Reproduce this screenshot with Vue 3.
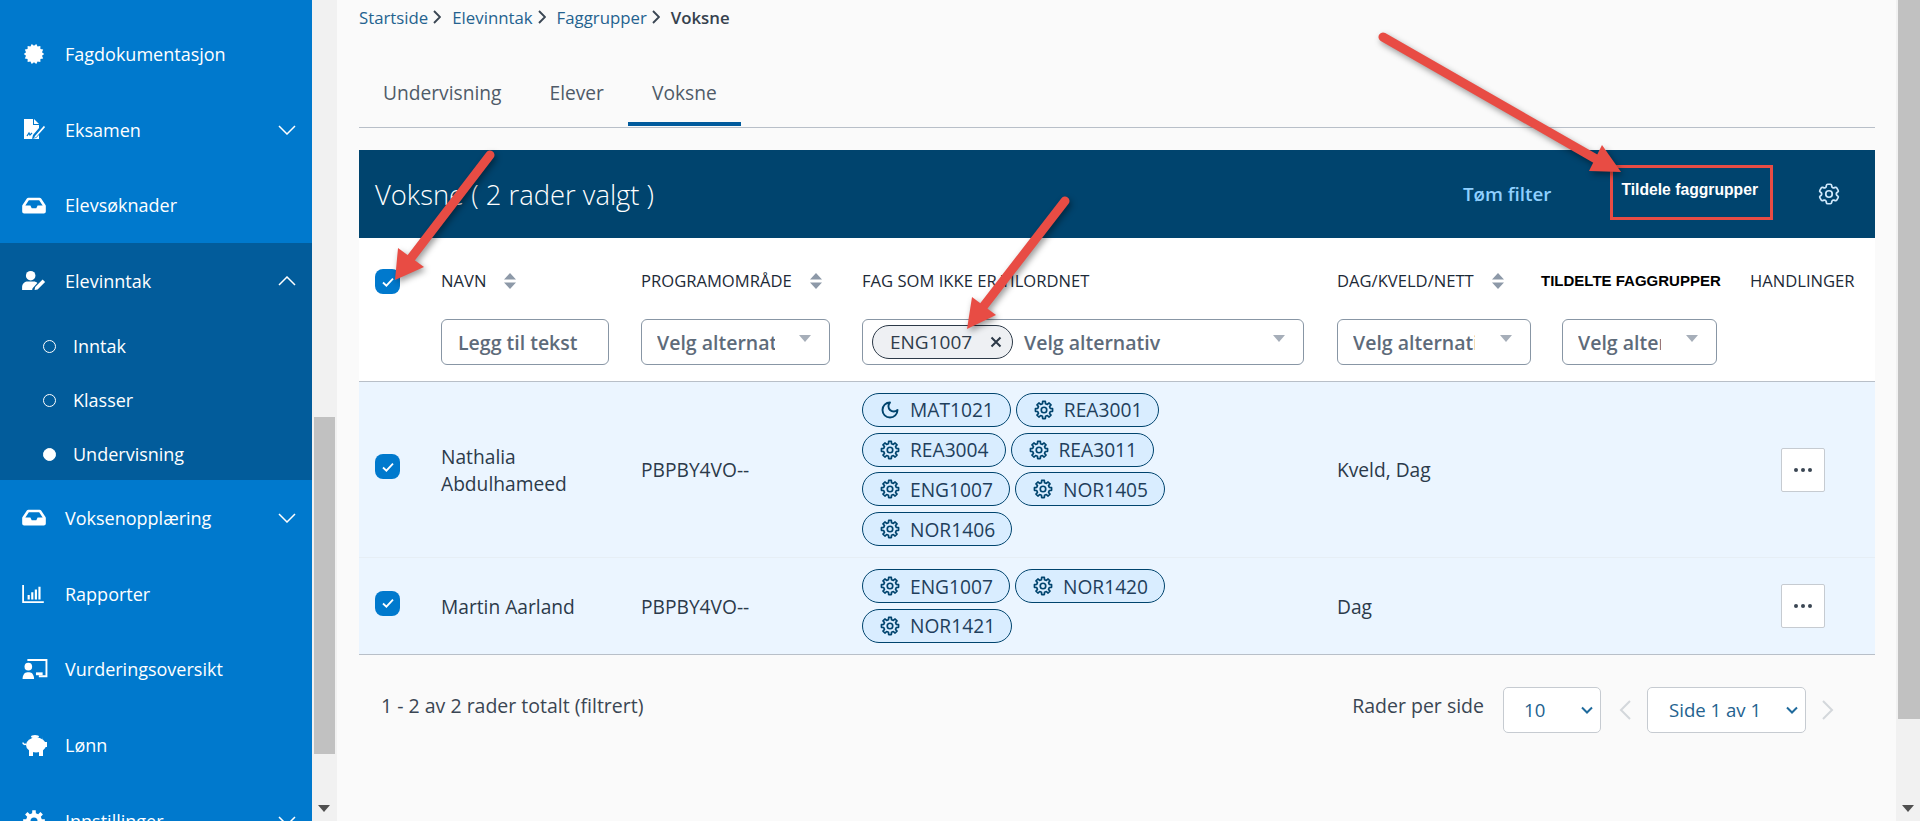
<script setup>
function gearPath(teeth, ro, ri) {
  const pts = []
  const step = (Math.PI * 2) / teeth
  for (let i = 0; i < teeth; i++) {
    const a = i * step - Math.PI / 2
    const w = step * 0.2
    const n = step * 0.3
    pts.push([ri, a - n], [ro, a - w], [ro, a + w], [ri, a + n])
  }
  return 'M' + pts.map(([r, a]) => (12 + r * Math.cos(a)).toFixed(2) + ' ' + (12 + r * Math.sin(a)).toFixed(2)).join('L') + 'Z'
}
function burstPath(points, ro, ri) {
  const pts = []
  for (let i = 0; i < points * 2; i++) {
    const r = i % 2 ? ri : ro
    const a = (i * Math.PI) / points
    pts.push((12 + r * Math.cos(a)).toFixed(2) + ' ' + (12 + r * Math.sin(a)).toFixed(2))
  }
  return 'M' + pts.join('L') + 'Z'
}
const gear8 = gearPath(8, 10.4, 7.8)
const burst = burstPath(14, 10.2, 8.2)
const inbox = 'M567.938 243.908L462.25 85.374A48.003 48.003 0 0 0 422.311 64H153.689a48 48 0 0 0-39.938 21.374L8.062 243.908A47.994 47.994 0 0 0 0 270.533V400c0 26.51 21.49 48 48 48h480c26.51 0 48-21.49 48-48V270.533a47.994 47.994 0 0 0-8.062-26.625zM162.252 128h251.497l85.333 128H376l-32 64H232l-32-64H76.918l85.334-128z'

const menu = [
  { label: 'Fagdokumentasjon', icon: 'burst' },
  { label: 'Eksamen', icon: 'exam', chev: 'down' },
  { label: 'Elevsøknader', icon: 'inbox' },
]
const menuAfter = [
  { label: 'Voksenopplæring', icon: 'inbox', chev: 'down' },
  { label: 'Rapporter', icon: 'chart' },
  { label: 'Vurderingsoversikt', icon: 'board' },
  { label: 'Lønn', icon: 'pig' },
  { label: 'Innstillinger', icon: 'cog', chev: 'down' },
]
const subs = [
  { label: 'Inntak', on: false },
  { label: 'Klasser', on: false },
  { label: 'Undervisning', on: true },
]
const rows = [
  {
    name: 'Nathalia Abdulhameed', prog: 'PBPBY4VO--', time: 'Kveld, Dag', cls: 'tall',
    chips: [['moon', 'MAT1021'], ['gear', 'REA3001'], ['gear', 'REA3004'], ['gear', 'REA3011'], ['gear', 'ENG1007'], ['gear', 'NOR1405'], ['gear', 'NOR1406']],
  },
  {
    name: 'Martin Aarland', prog: 'PBPBY4VO--', time: 'Dag', cls: 'short',
    chips: [['gear', 'ENG1007'], ['gear', 'NOR1420'], ['gear', 'NOR1421']],
  },
]
const gear6 = 'M9.594 3.94c.09-.542.56-.94 1.11-.94h2.593c.55 0 1.02.398 1.11.94l.213 1.281c.063.374.313.686.645.87.074.04.147.083.22.127.325.196.72.257 1.075.124l1.217-.456a1.125 1.125 0 0 1 1.37.49l1.296 2.247a1.125 1.125 0 0 1-.26 1.431l-1.003.827c-.293.241-.438.613-.43.992a7.723 7.723 0 0 1 0 .255c-.008.378.137.75.43.991l1.004.827c.424.35.534.955.26 1.43l-1.298 2.247a1.125 1.125 0 0 1-1.369.491l-1.217-.456c-.355-.133-.75-.072-1.076.124a6.47 6.47 0 0 1-.22.128c-.331.183-.581.495-.644.869l-.213 1.281c-.09.543-.56.94-1.11.94h-2.594c-.55 0-1.019-.398-1.11-.94l-.213-1.281c-.062-.374-.312-.686-.644-.87a6.52 6.52 0 0 1-.22-.127c-.325-.196-.72-.257-1.076-.124l-1.217.456a1.125 1.125 0 0 1-1.369-.49l-1.297-2.247a1.125 1.125 0 0 1 .26-1.431l1.004-.827c.292-.24.437-.613.43-.991a6.932 6.932 0 0 1 0-.255c.007-.38-.138-.751-.43-.992l-1.004-.827a1.125 1.125 0 0 1-.26-1.43l1.297-2.247a1.125 1.125 0 0 1 1.37-.491l1.216.456c.356.133.751.072 1.076-.124.072-.044.146-.086.22-.128.332-.183.582-.495.644-.869l.214-1.28Z'
const arrows = [
  { x1: 1383, y1: 37, x2: 1596, y2: 159, head: '1602,145 1589,171 1621,172' },
  { x1: 490, y1: 155, x2: 408, y2: 262, head: '398,248 424,267 395,280' },
  { x1: 1065, y1: 201, x2: 983, y2: 307, head: '972,297 996,315 967,329' },
]
</script>

<template>
  <div class="page">
    <aside class="side">
      <div v-for="m in menu" :key="m.label" class="item">
        <span class="ic">
          <svg v-if="m.icon === 'burst'" viewBox="0 0 24 24" width="24" height="24"><path :d="burst" fill="#fff" /></svg>
          <svg v-else-if="m.icon === 'exam'" viewBox="0 0 24 24" width="24" height="24">
            <path d="M2 1h9v6h6v3l-6 7-1 4 4-1 3-3v4H2z" fill="#fff" />
            <path d="M12 1l5 5h-5z" fill="#fff" />
            <path d="M13 18l-1 2 2-.8 9-10-1-1.4z" fill="#fff" />
            <path d="M5 18l2-3 1 2 2-2" stroke="#0079cd" stroke-width="1.2" fill="none" />
          </svg>
          <svg v-else viewBox="0 0 576 512" width="24" height="21"><path :d="inbox" fill="#fff" /></svg>
        </span>
        <span class="lbl">{{ m.label }}</span>
        <svg v-if="m.chev" class="chev" viewBox="0 0 18 10" width="18" height="10"><path d="M1 1l8 8 8-8" fill="none" stroke="#fff" stroke-width="1.5" /></svg>
      </div>

      <div class="group">
        <div class="item">
          <span class="ic">
            <svg viewBox="0 0 26 22" width="25" height="21">
              <circle cx="9" cy="6" r="5" fill="#fff" />
              <path d="M0 21v-3c0-4 3-6 6-6h6c2 0 3 .6 4 1.5L11 19l-.5 2z" fill="#fff" />
              <path d="M13 21l.7-3.2 7.8-7.8 2.6 2.6-7.8 7.8z" fill="#fff" />
            </svg>
          </span>
          <span class="lbl">Elevinntak</span>
          <svg class="chev" viewBox="0 0 18 10" width="18" height="10"><path d="M1 9l8-8 8 8" fill="none" stroke="#fff" stroke-width="1.5" /></svg>
        </div>
        <div v-for="s in subs" :key="s.label" class="sub">
          <span class="dot" :class="{ on: s.on }"></span>
          <span class="lbl">{{ s.label }}</span>
        </div>
      </div>

      <div v-for="m in menuAfter" :key="m.label" class="item">
        <span class="ic">
          <svg v-if="m.icon === 'inbox'" viewBox="0 0 576 512" width="24" height="21"><path :d="inbox" fill="#fff" /></svg>
          <svg v-else-if="m.icon === 'chart'" viewBox="0 0 24 20" width="22" height="18">
            <path d="M1 0v19h23" fill="none" stroke="#fff" stroke-width="2" />
            <path d="M6 11h2.4v5H6zM10 8h2.4v8H10zM14 5h2.4v11H14zM18 2h2.4v14H18z" fill="#fff" />
          </svg>
          <svg v-else-if="m.icon === 'board'" viewBox="0 0 26 22" width="26" height="21">
            <circle cx="6" cy="8" r="4" fill="#fff" />
            <path d="M0 21c0-4 2-7 5-7h2c3 0 5 3 5 7z" fill="#fff" />
            <path d="M6 2V1h19v17h-8" fill="none" stroke="#fff" stroke-width="2" />
            <path d="M14 14h7v3h-7z" fill="#fff" />
          </svg>
          <svg v-else-if="m.icon === 'pig'" viewBox="0 0 26 22" width="26" height="22">
            <ellipse cx="14" cy="11" rx="10" ry="7.5" fill="#fff" />
            <path d="M7 15h4v7H7zM17 15h4v7h-4z" fill="#fff" />
            <path d="M20 3l1 5h4v5h-4z" fill="#fff" />
            <ellipse cx="13" cy="2.6" rx="4" ry="1.6" fill="#fff" />
            <path d="M4.5 10c-2 1-3.5 0-3.5-1.5" stroke="#fff" stroke-width="1.5" fill="none" />
          </svg>
          <svg v-else viewBox="0 0 24 24" width="24" height="24"><path :d="gearPath(8, 11, 8)" fill="#fff" /><circle cx="12" cy="12" r="3.5" fill="#0079cd" /></svg>
        </span>
        <span class="lbl">{{ m.label }}</span>
        <svg v-if="m.chev" class="chev" viewBox="0 0 18 10" width="18" height="10"><path d="M1 1l8 8 8-8" fill="none" stroke="#fff" stroke-width="1.5" /></svg>
      </div>
    </aside>

    <div class="bar left">
      <div class="thumb"></div>
      <span class="tri"></span>
    </div>

    <main class="main">
      <nav class="crumbs">
        <a>Startside</a><svg class="sep" viewBox="0 0 8 14" width="8" height="14"><path d="M1 1l6 6-6 6" fill="none" stroke="#3a4653" stroke-width="1.9" /></svg>
        <a>Elevinntak</a><svg class="sep" viewBox="0 0 8 14" width="8" height="14"><path d="M1 1l6 6-6 6" fill="none" stroke="#3a4653" stroke-width="1.9" /></svg>
        <a>Faggrupper</a><svg class="sep" viewBox="0 0 8 14" width="8" height="14"><path d="M1 1l6 6-6 6" fill="none" stroke="#3a4653" stroke-width="1.9" /></svg>
        <b>Voksne</b>
      </nav>

      <div class="tabs">
        <span class="tab">Undervisning</span>
        <span class="tab">Elever</span>
        <span class="tab active">Voksne</span>
      </div>

      <header class="tbar">
        <h1>Voksne ( 2 rader valgt )</h1>
        <span class="clear">Tøm filter</span>
        <span class="assign">Tildele faggrupper</span>
        <svg class="cfg" viewBox="0 0 24 24" width="26" height="26" fill="none" stroke="#cfe8fb" stroke-width="1.6"><path :d="gear6" /><circle cx="12" cy="12" r="3" /></svg>
      </header>

      <section class="thead grid">
        <div class="c-check"><span class="cb"><svg viewBox="0 0 16 16" width="16" height="16"><path d="M3 8.5l3.4 3.2L13 4.6" fill="none" stroke="#fff" stroke-width="1.8" /></svg></span></div>
        <div class="hc">
          <div class="ht">NAVN<svg class="sort" viewBox="0 0 12 16" width="12" height="16"><path d="M6 0l6 6.5H0zM6 16L0 9.5h12z" fill="#8d99a8" /></svg></div>
          <div class="field f-name"><span class="ph">Legg til tekst</span></div>
        </div>
        <div class="hc">
          <div class="ht">PROGRAMOMRÅDE<svg class="sort" viewBox="0 0 12 16" width="12" height="16"><path d="M6 0l6 6.5H0zM6 16L0 9.5h12z" fill="#8d99a8" /></svg></div>
          <div class="field f-prog"><span class="ph clip">Velg alternativ</span><i class="caret"></i></div>
        </div>
        <div class="hc">
          <div class="ht">FAG SOM IKKE ER TILORDNET</div>
          <div class="field f-fag">
            <span class="sel-chip">ENG1007<svg viewBox="0 0 12 12" width="12" height="12"><path d="M1.5 1.5l9 9M10.5 1.5l-9 9" stroke="#2c3947" stroke-width="2" /></svg></span>
            <span class="ph">Velg alternativ</span><i class="caret"></i>
          </div>
        </div>
        <div class="hc">
          <div class="ht">DAG/KVELD/NETT<svg class="sort" viewBox="0 0 12 16" width="12" height="16"><path d="M6 0l6 6.5H0zM6 16L0 9.5h12z" fill="#8d99a8" /></svg></div>
          <div class="field f-dag"><span class="ph clip">Velg alternativ</span><i class="caret"></i></div>
        </div>
        <div class="hc">
          <div class="ht arial">TILDELTE FAGGRUPPER</div>
          <div class="field f-til"><span class="ph clip">Velg alternativ</span><i class="caret"></i></div>
        </div>
        <div class="hc">
          <div class="ht">HANDLINGER</div>
        </div>
      </section>

      <section class="tbody">
        <div v-for="r in rows" :key="r.name" class="row grid" :class="r.cls">
          <div class="c-check"><span class="cb"><svg viewBox="0 0 16 16" width="16" height="16"><path d="M3 8.5l3.4 3.2L13 4.6" fill="none" stroke="#fff" stroke-width="1.8" /></svg></span></div>
          <div class="cell name">{{ r.name }}</div>
          <div class="cell">{{ r.prog }}</div>
          <div class="chips">
            <span v-for="c in r.chips" :key="c[1]" class="chip">
              <svg v-if="c[0] === 'moon'" viewBox="0 0 24 24" width="20" height="20" fill="none" stroke="#00446e" stroke-width="2.3" stroke-linejoin="round"><path d="M12 3a6 6 0 0 0 9 9 9 9 0 1 1-9-9Z" /></svg>
              <svg v-else viewBox="0 0 24 24" width="20" height="20" fill="none" stroke="#00446e" stroke-width="2" stroke-linejoin="round"><path :d="gear8" /><circle cx="12" cy="12" r="3.3" /></svg>
              {{ c[1] }}
            </span>
          </div>
          <div class="cell">{{ r.time }}</div>
          <div></div>
          <div class="cell act"><button class="more"><i></i><i></i><i></i></button></div>
        </div>
      </section>

      <footer class="foot">
        <span class="total">1 - 2 av 2 rader totalt (filtrert)</span>
        <span class="rpp">Rader per side</span>
        <div class="psel p10">10<svg viewBox="0 0 12 8" width="12" height="8"><path d="M1 1.5l5 5 5-5" fill="none" stroke="#1f6a9c" stroke-width="2" /></svg></div>
        <svg class="pg prev" viewBox="0 0 12 20" width="12" height="20"><path d="M11 1L2 10l9 9" fill="none" stroke="#d3d7db" stroke-width="2" /></svg>
        <div class="psel pside">Side 1 av 1<svg viewBox="0 0 12 8" width="12" height="8"><path d="M1 1.5l5 5 5-5" fill="none" stroke="#1f6a9c" stroke-width="2" /></svg></div>
        <svg class="pg" viewBox="0 0 12 20" width="12" height="20"><path d="M1 1l9 9-9 9" fill="none" stroke="#d3d7db" stroke-width="2" /></svg>
      </footer>
    </main>

    <div class="bar right">
      <div class="thumb"></div>
      <span class="tri"></span>
    </div>

    <svg class="notes" viewBox="0 0 1920 821" width="1920" height="821">
      <rect x="1611.5" y="166.5" width="160" height="52" fill="none" stroke="#e84c44" stroke-width="3" />
      <g v-for="a in arrows" :key="a.head" class="arrow">
        <line :x1="a.x1" :y1="a.y1" :x2="a.x2" :y2="a.y2" stroke="#e84c44" stroke-width="9" stroke-linecap="round" />
        <polygon :points="a.head" fill="#e84c44" />
      </g>
    </svg>
  </div>
</template>

<style>
html, body { margin: 0; height: 821px; overflow: hidden; background: #fafafa; }
</style>

<style scoped>
.page { position: relative; display: flex; width: 1920px; height: 821px; overflow: hidden; font-family: "Open Sans", "Noto Sans", sans-serif; color: #2b3a4a; background: #fafafa; }

.side { width: 312px; flex: none; background: #0079cd; color: #fff; padding-top: 16px; box-sizing: border-box; overflow: hidden; font-size: 18px; }
.item { height: 75.7px; display: flex; align-items: center; padding: 0 16px 0 22px; position: relative; }
.ic { width: 43px; flex: none; display: flex; align-items: center; }
.chev { margin-left: auto; }
.group { background: #025c9b; }
.group .item { height: 75px; }
.sub { height: 54px; display: flex; align-items: center; padding-left: 43px; position: relative; top: 1px; }
.dot { width: 13px; height: 13px; border: 1.5px solid #fff; border-radius: 50%; box-sizing: border-box; margin-right: 17px; }
.dot.on { background: #fff; }

.bar { flex: none; background: #f1f1f1; position: relative; }
.bar.left { width: 25px; padding-top: 417px; box-sizing: border-box; }
.bar.left .thumb { width: 21px; height: 337px; margin-left: 2px; background: #c1c1c1; }
.bar.right { width: 24px; }
.bar.right .thumb { width: 22px; height: 719px; margin-left: 2px; background: #c1c1c1; }
.tri { position: absolute; bottom: 9px; left: 6px; border: 6px solid transparent; border-top: 7px solid #505050; border-bottom: 0; }

.main { width: 1559px; flex: none; box-sizing: border-box; padding: 0 21px 0 22px; }
.crumbs { height: 34px; display: flex; align-items: center; gap: 5px; font-size: 16.8px; }
.crumbs a { color: #24628f; }
.crumbs .sep { margin-right: 6px; }
.crumbs b { font-weight: 600; color: #35414d; }
.tabs { padding-top: 35px; box-sizing: border-box; display: flex; align-items: flex-start; border-bottom: 1px solid #b8bfc8; height: 94px; }
.tab { height: 58px; line-height: 48px; padding: 0 24px; font-size: 19.2px; color: #4f5b68; box-sizing: border-box; }
.tab.active { border-bottom: 4px solid #005a9c; height: 57px; }

.tbar { margin-top: 22px; height: 88px; background: #00446e; display: flex; align-items: center; padding: 0 33px 0 16px; color: #fff; }
.tbar h1 { margin: 0; font-size: 27.4px; font-weight: 300; flex: 1; }
.clear { color: #8fd0ff; font-size: 18.8px; font-weight: 600; margin-right: 70px; }
.assign { font-family: "Liberation Sans", Arial, sans-serif; font-weight: 700; font-size: 15.7px; margin-right: 58px; position: relative; top: -4px; }
.cfg { flex: none; }

.grid { display: grid; grid-template-columns: 82px 200px 221px 475px 204px 209px 125px; }
.thead { background: #fff; height: 143px; }
.c-check { padding-left: 16px; display: flex; }
.thead .c-check { padding-top: 31px; }
.cb { width: 25px; height: 25px; border-radius: 8px; background: #0079cd; display: flex; align-items: center; justify-content: center; }
.hc { padding-top: 31px; }
.ht { height: 23px; display: flex; align-items: center; font-size: 16.6px; font-weight: 500; color: #1d2a37; white-space: nowrap; }
.ht.arial { font-family: "Liberation Sans", Arial, sans-serif; font-weight: 700; font-size: 15px; color: #000; }
.sort { margin-left: 18px; flex: none; }
.field { margin-top: 27px; height: 46px; box-sizing: border-box; border: 1px solid #8896a5; border-radius: 6px; background: #fff; display: flex; align-items: center; position: relative; padding-left: 15px; }
.f-name { width: 168px; padding-left: 16px; }
.f-prog { width: 189px; }
.f-fag { width: 442px; padding-left: 9px; }
.f-dag { width: 194px; }
.f-til { width: 155px; margin-left: 21px; }
.ph { font-size: 19.5px; font-weight: 600; color: #5e6b7a; white-space: nowrap; }
.clip { overflow: hidden; }
.f-prog .clip { width: 118px; }
.f-dag .clip { width: 122px; }
.f-til .clip { width: 83px; }
.caret { position: absolute; right: 18px; top: 15px; border: 6px solid transparent; border-top: 7px solid #a6aeb9; border-bottom: 0; }
.sel-chip { height: 34px; box-sizing: border-box; width: 141px; border: 1px solid #2c3947; border-radius: 17px; background: #eef0f3; display: flex; align-items: center; justify-content: space-between; padding: 0 10px 0 17px; font-size: 19px; font-weight: 500; color: #2f3c4a; margin-right: 11px; }

.tbody { border-top: 1px solid #b8bfc8; border-bottom: 1px solid #b8bfc8; }
.row { background: #ebf5ff; align-items: center; }
.row.tall { height: 175px; border-bottom: 1px solid #e6eef5; box-sizing: content-box; }
.row.short { height: 96px; }
.row .c-check { margin-top: -6px; }
.cell { font-size: 19.2px; line-height: 27px; color: #2b3a4a; }
.name { width: 150px; }
.chips { display: flex; flex-wrap: wrap; gap: 5.7px 5px; max-width: 330px; align-content: flex-start; }
.chip { height: 34px; box-sizing: border-box; display: inline-flex; align-items: center; gap: 10px; padding: 0 16px 0 17px; border: 1px solid #00446e; border-radius: 17px; background: #d9edff; font-size: 19.2px; color: #1f3f5c; white-space: nowrap; }
.act { padding-left: 31px; }
.more { width: 44px; height: 44px; background: #fff; border: 1px solid #c6cbd1; border-radius: 2px; display: flex; align-items: center; justify-content: center; gap: 3px; padding: 0; }
.more i { width: 4px; height: 4px; border-radius: 50%; background: #3a4653; }

.foot { display: flex; align-items: center; height: 101px; padding: 0 0 0 22px; }
.total { font-size: 19.5px; flex: 1; color: #3a4653; }
.rpp { font-size: 19.5px; color: #3a4653; margin-right: 19px; }
.psel { height: 46px; box-sizing: border-box; border: 1px solid #c6cbd1; border-radius: 5px; background: #fff; display: flex; align-items: center; justify-content: space-between; font-size: 18.6px; color: #24628f; padding: 0 7px 0 20px; margin-top: 8px; }
.p10 { width: 98px; }
.pside { width: 159px; padding-left: 21px; }
.pg { margin: 8px 16px 0; flex: none; }
.pg.prev { margin-left: 18px; }
.pg:last-child { margin-right: 41px; }

.notes { position: absolute; left: 0; top: 0; pointer-events: none; }
.arrow { filter: drop-shadow(2px 3px 3px rgba(0,0,0,.4)); }
</style>
